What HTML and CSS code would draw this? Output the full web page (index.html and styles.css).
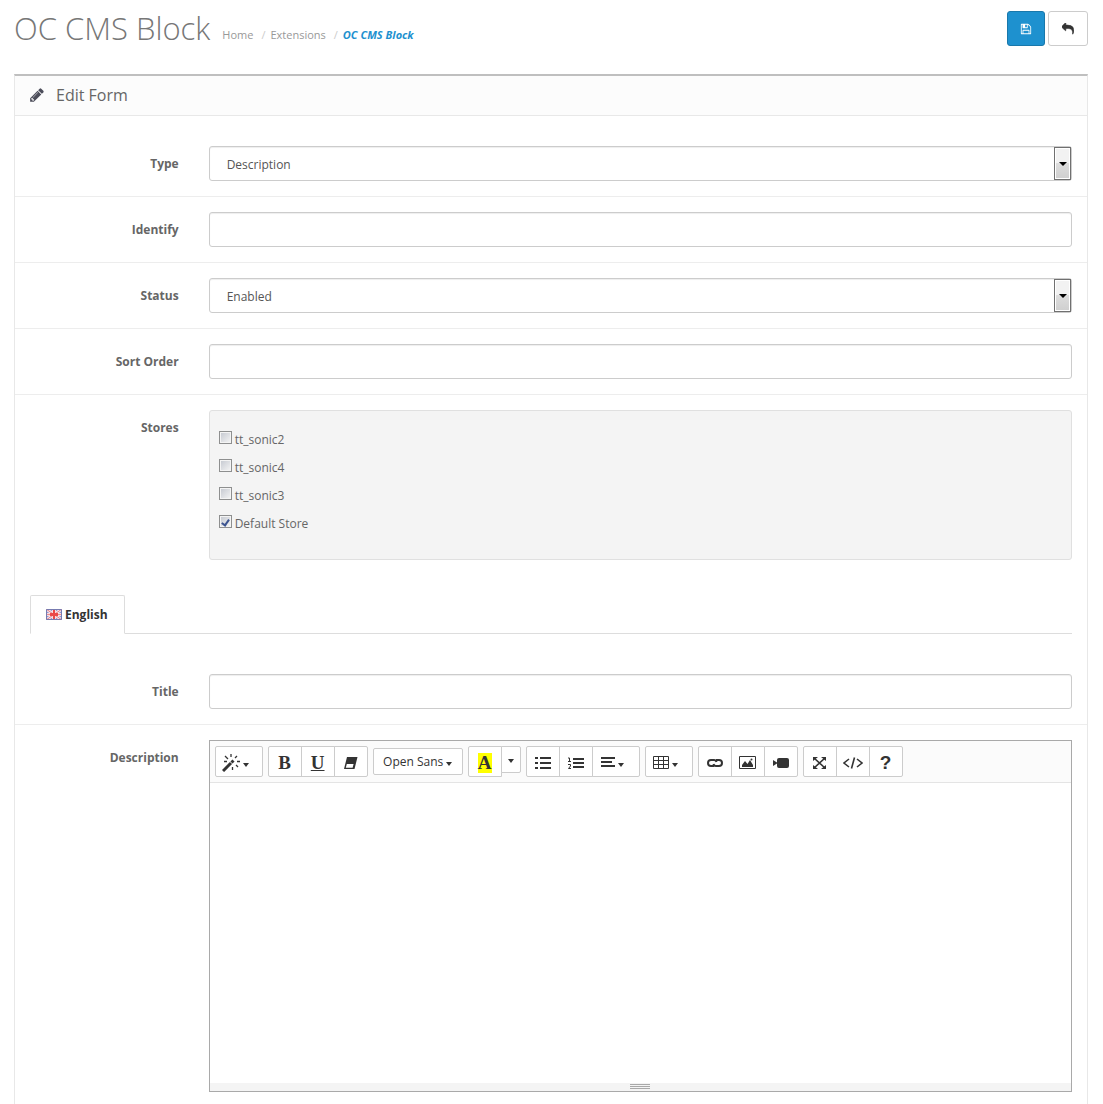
FILE: index.html
```html
<!DOCTYPE html>
<html lang="en">
<head>
<meta charset="utf-8">
<title>OC CMS Block</title>
<link rel="stylesheet" href="styles.css">
</head>
<body>
<header class="page-header">
  <h1>OC CMS Block</h1>
  <nav class="breadcrumb" aria-label="Breadcrumb">
    <a href="#">Home</a><span class="sep">/</span><a href="#">Extensions</a><span class="sep">/</span><a href="#" class="current">OC CMS Block</a>
  </nav>
  <div class="actions">
    <button type="button" class="btn btn-primary" aria-label="Save"><svg viewBox="0 0 1792 1792" width="12" height="12"><path d="M512 1536h768v-384h-768v384zm896 0h128v-896q0-14-10-38.500t-20-34.500l-281-281q-10-10-34-20t-39-10v416q0 40-28 68t-68 28h-576q-40 0-68-28t-28-68v-416h-128v1280h128v-416q0-40 28-68t68-28h832q40 0 68 28t28 68v416zm-384-928v-320q0-13-9.500-22.500t-22.500-9.500h-192q-13 0-22.500 9.500t-9.500 22.500v320q0 13 9.500 22.500t22.500 9.500h192q13 0 22.500-9.500t9.500-22.500zm640 32v928q0 40-28 68t-68 28h-1344q-40 0-68-28t-28-68v-1344q0-40 28-68t68-28h928q40 0 88 20t76 48l280 280q28 28 48 76t20 88z"/></svg></button>
    <button type="button" class="btn" aria-label="Back"><svg viewBox="0 0 1792 1792" width="12" height="12"><path stroke="currentColor" stroke-width="90" d="M1792 1120q0 166-127 451-3 7-10.500 24t-13.500 30-13 22q-12 17-28 17-15 0-23.500-10t-8.500-25q0-9 2.500-26.500t2.500-23.500q5-68 5-123 0-112-19.500-200.500t-54-153.500-89-112-116-80-143-50.500-162-25.500-193.500-8h-224v256q0 26-19 45t-45 19-45-19l-512-512q-19-19-19-45t19-45l512-512q19-19 45-19t45 19 19 45v256h224q713 0 875 403 53 134 53 333z"/></svg></button>
  </div>
</header>

<main class="panel">
  <div class="panel-heading">
    <svg viewBox="0 0 1792 1792" width="16" height="16"><path d="M491 1536l91-91-235-235-91 91v107h128v128h107zm523-928q0-22-22-22-10 0-17 7l-542 542q-7 7-7 17 0 22 22 22 10 0 17-7l542-542q7-7 7-17zm-54-192l416 416-832 832h-416v-416zm683 96q0 53-37 90l-166 166-416-416 166-165q36-38 90-38 53 0 91 38l235 234q37 39 37 91z"/></svg>
    <h2>Edit Form</h2>
  </div>
  <form class="panel-body">
    <div class="form-group">
      <label for="type">Type</label>
      <div class="select"><select id="type" class="control"><option>Description</option></select></div>
    </div>
    <div class="form-group">
      <label for="identify">Identify</label>
      <input id="identify" class="control" type="text">
    </div>
    <div class="form-group">
      <label for="status">Status</label>
      <div class="select"><select id="status" class="control"><option>Enabled</option><option>Disabled</option></select></div>
    </div>
    <div class="form-group">
      <label for="sort">Sort Order</label>
      <input id="sort" class="control" type="text">
    </div>
    <div class="form-group" role="group" aria-labelledby="stores">
      <span class="label" id="stores">Stores</span>
      <div class="well">
        <label><input type="checkbox">tt_sonic2</label>
        <label><input type="checkbox">tt_sonic4</label>
        <label><input type="checkbox">tt_sonic3</label>
        <label><input type="checkbox" checked>Default Store</label>
      </div>
    </div>

    <div class="tabs">
      <a href="#english" class="tab">
        <svg viewBox="0 0 16 11" width="16" height="11"><path fill="#8f97d0" d="M0 0h16v11H0z"/><path stroke="#fbe6ea" stroke-width="3" d="M0 0l16 11M16 0L0 11"/><path stroke="#e0808c" d="M0 0l16 11M16 0L0 11"/><path fill="#f8dcdf" d="M6 0h4v11H6zM0 4h16v3H0z"/><path fill="#ea4a4a" d="M7 1h2v9H7zM4 4h8v3H4z"/><path fill="#ee8d8d" d="M1 5h3v1H1zM12 5h3v1h-3z"/><path fill="none" stroke="#777bb0" d="M.5.5h15v10H.5z"/></svg>
        English</a>
    </div>

    <div id="english">
      <div class="form-group">
        <label for="title">Title</label>
        <input id="title" class="control" type="text">
      </div>
      <div class="form-group">
        <label for="description">Description</label>
        <div class="editor">
          <div class="toolbar" role="toolbar">
            <div class="group"><button type="button" class="tool wide" aria-label="Style"><svg viewBox="0 0 18 18" width="18" height="18"><path stroke="#333" stroke-width="3" d="M1 17l8-8"/><path stroke="#333" stroke-width="3" d="M9.500 8.500l2-2"/><path stroke="#333" fill="none" stroke-width="1.300" d="M9 0v3M3 2l3 3M2 7.500h3M15 2l-2 2M15 7.500h3M14 11l2 2M10.500 13v3"/></svg><span class="caret"></span></button></div>
            <div class="group">
              <button type="button" class="tool serif">B</button><button type="button" class="tool serif underline">U</button><button type="button" class="tool" aria-label="Clear formatting"><svg viewBox="0 0 14 12" width="14" height="12"><path d="M3 0h10.500L10.500 12H0zM2.800 7l-1 3.700h6.800l1-3.700z" fill-rule="evenodd"/></svg></button>
            </div>
            <div class="group"><button type="button" class="tool font-name">Open Sans<span class="caret"></span></button></div>
            <div class="group">
              <button type="button" class="tool serif"><span class="mark">A</span></button><button type="button" class="tool more" aria-label="More colors"><span class="caret"></span></button>
            </div>
            <div class="group">
              <button type="button" class="tool" aria-label="Bulleted list"><svg viewBox="0 0 16 12" width="16" height="12"><path d="M0 0h3v2H0zM5 0h11v2H5zM0 5h3v2H0zM5 5h11v2H5zM0 10h3v2H0zM5 10h11v2H5z"/></svg></button><button type="button" class="tool" aria-label="Numbered list"><svg viewBox="0 0 16 12" width="16" height="12"><path d="M5 1h11v2H5zM5 5h11v2H5zM5 9h11v2H5z"/><path fill="none" stroke="#333" d="M0 1h1.500v4M0 4.500h3M0 7.500h2.500v1.500l-2 2.500H3"/></svg></button><button type="button" class="tool wide" aria-label="Align"><svg viewBox="0 0 14 11" width="14" height="11"><path d="M0 0h14v2H0zM0 4h11v2H0zM0 8h14v2H0z"/></svg><span class="caret"></span></button>
            </div>
            <div class="group"><button type="button" class="tool wide" aria-label="Table"><svg viewBox="0 0 16 13" width="16" height="13"><path fill="none" stroke="#333" d="M.5.500h15v12H.5zM0 4.500h16M0 8.500h16M5.500 0v13M10.500 0v13"/></svg><span class="caret"></span></button></div>
            <div class="group">
              <button type="button" class="tool" aria-label="Link"><svg viewBox="0 0 16 8" width="16" height="8"><path fill="none" stroke="#333" stroke-width="2" d="M7 7H4a3 3 0 010-6h3q2 0 2.500 2M9 1h3a3 3 0 010 6H9Q7 7 6.500 5"/></svg></button><button type="button" class="tool" aria-label="Picture"><svg viewBox="0 0 17 13" width="17" height="13"><path fill="none" stroke="#333" d="M.5.500h16v12H.5z"/><path d="M3 11V9l3-4 2.500 3L11 4l3 5v2z"/><circle cx="12.500" cy="3.500" r="1"/></svg></button><button type="button" class="tool" aria-label="Video"><svg viewBox="0 0 16 10" width="16" height="10"><path d="M0 2l4 2.500V2q0-2 2-2h8q2 0 2 2v6q0 2-2 2H6q-2 0-2-2V5.500L0 8z"/></svg></button>
            </div>
            <div class="group">
              <button type="button" class="tool" aria-label="Full screen"><svg viewBox="0 0 13 12" width="13" height="12"><path d="M0 0h5L0 4zM13 0H8l5 4zM0 12h5L0 8zM13 12H8l5-4z"/><path stroke="#333" stroke-width="1.600" d="M1 1l11 10M12 1L1 11"/></svg></button><button type="button" class="tool" aria-label="Code view"><svg viewBox="0 0 20 12" width="20" height="12"><path fill="none" stroke="#333" stroke-width="1.600" d="M6 2L1 6l5 4M14 2l5 4-5 4M11.500.500l-3 11"/></svg></button><button type="button" class="tool help">?</button>
            </div>
          </div>
          <textarea id="description"></textarea>
          <div class="resizer"><span></span></div>
        </div>
      </div>
    </div>
  </form>
</main>
</body>
</html>
```
FILE: styles.css
```css
*, ::before, ::after { box-sizing: border-box; }

body {
  margin: 0;
  padding: 0 15px 0 14px;
  background: #fff;
  color: #666;
  font: 12px/18px "Open Sans", sans-serif;
}

button, input, select, textarea { font: inherit; color: inherit; }
a { color: inherit; text-decoration: none; }
svg { display: block; flex: none; fill: currentColor; }

.page-header { display: flex; align-items: flex-start; height: 74px; padding-top: 11px; }
h1 { margin: 0; color: #777; font-size: 31px; line-height: 34px; font-weight: 300; }
.breadcrumb { margin: 15px 0 0 12px; font-size: 11px; color: #999; }
.sep { padding: 0 5px 0 8px; color: #ccc; }
.current { color: #1e91cf; font-weight: 700; font-style: italic; }
.actions { display: flex; gap: 3px; margin-left: auto; }

.btn {
  display: flex;
  align-items: center;
  justify-content: center;
  width: 40px;
  height: 35px;
  padding: 0;
  border: 1px solid #ccc;
  border-radius: 3px;
  background: #fff;
  color: #333;
}
.btn-primary { width: 38px; border-color: #1978ab; background: #1e91cf; color: #fff; }

.panel { border: 1px solid #e8e8e8; border-top: 2px solid #bfbfbf; border-bottom: 0; }
.panel-heading {
  display: flex;
  align-items: center;
  gap: 11px;
  height: 40px;
  padding: 0 14px 2px;
  border-bottom: 1px solid #e8e8e8;
  background: #fcfcfc;
  color: #4c4d5a;
}
h2 { margin: 0; color: #666; font-size: 16px; line-height: 20px; font-weight: 400; }
.panel-body { padding-top: 15px; }

.form-group {
  display: grid;
  grid-template-columns: calc((100% + 15px) / 6 + 15px) 1fr;
  align-items: start;
  padding: 15px 15px 15px 0;
}
.form-group + .form-group { border-top: 1px solid #ededed; }
.form-group > label, .label { padding: 9px 0 0 15px; margin-right: 30px; text-align: right; font-weight: 700; }

.control {
  display: block;
  width: 100%;
  height: 35px;
  padding: 2px 17px 0;
  border: 1px solid #ccc;
  border-radius: 3px;
  background: #fff;
  color: #555;
  appearance: none;
  box-shadow: inset 0 1px 1px rgba(0, 0, 0, .07);
}
.select { position: relative; }
.select::before, .select::after { content: ""; position: absolute; pointer-events: none; }
.select::before {
  top: 1px;
  right: 1px;
  width: 17px;
  height: 33px;
  border: 1px solid #707070;
  background: linear-gradient(#f2f2f2 50%, #ddd 50%, #cfcfcf);
  box-shadow: inset 0 0 0 1px #fff;
}
.select::after { top: 16px; right: 5px; border: 4px solid transparent; border-top-color: #000; border-bottom: 0; }

.well {
  height: 150px;
  padding: 16px 9px;
  border: 1px solid #e0e0e0;
  border-radius: 3px;
  background: #f4f4f4;
}
.well label { display: flex; gap: 3px; height: 28px; padding-top: 4px; }
.well input {
  appearance: none;
  display: grid;
  place-items: center;
  width: 13px;
  height: 13px;
  margin: 0;
  border: 1px solid #8e8f8f;
  background: linear-gradient(135deg, #c3c7cf, #f6f6f6);
  box-shadow: inset 0 0 0 1px #f4f4f4;
}
.well input:checked::after {
  content: "";
  width: 5px;
  height: 8px;
  border: solid #3c5490;
  border-width: 0 2px 2px 0;
  transform: rotate(35deg);
}

.tabs { display: flex; margin: 20px 15px 25px; border-bottom: 1px solid #ddd; }
.tab {
  display: flex;
  align-items: center;
  gap: 3px;
  height: 39px;
  margin-bottom: -1px;
  padding: 0 16px 0 15px;
  border: 1px solid #ddd;
  border-bottom-color: #fff;
  border-radius: 2px 2px 0 0;
  background: #fff;
  color: #333;
  font-weight: 700;
}

.editor { border: 1px solid #a9a9a9; }
.toolbar {
  display: flex;
  flex-wrap: wrap;
  gap: 5px;
  padding: 5px;
  border-bottom: 1px solid #e4e4e4;
  background: #fbfbfb;
}
.group { display: flex; }
.tool {
  display: flex;
  align-items: center;
  justify-content: center;
  width: 34px;
  height: 31px;
  padding: 2px 0 0;
  border: 1px solid #ccc;
  background: #fff;
  color: #333;
}
.tool + .tool { margin-left: -1px; }
.tool:first-child { border-radius: 2px 0 0 2px; }
.tool:last-child { border-radius: 0 2px 2px 0; }
.tool:only-child { border-radius: 2px; }
.wide { width: 48px; padding-right: 6px; }
.group .font-name { width: 90px; height: 27px; margin-top: 2px; padding-top: 0; }
.more { width: 20px; height: 27px; }
.serif { font: 700 19px/20px "Liberation Serif", serif; }
.underline { text-decoration: underline; }
.mark { width: 14px; background: #ff0; }
.help { font: 700 19px/20px "Liberation Sans", sans-serif; }
.caret { margin: 4px 0 0 3px; border: 3px solid transparent; border-top: 4px solid #333; border-bottom: 0; }
.more .caret { margin: 0; }

textarea { display: block; width: 100%; height: 300px; padding: 10px; border: 0; resize: none; outline: 0; }
.resizer { display: flex; justify-content: center; height: 8px; padding-top: 1px; background: #f4f4f4; }
.resizer span { width: 20px; height: 5px; border: solid #a9a9a9; border-width: 1px 0; background: linear-gradient(#f4f4f4 1px, #a9a9a9 1px, #a9a9a9 2px, #f4f4f4 2px); }
```
